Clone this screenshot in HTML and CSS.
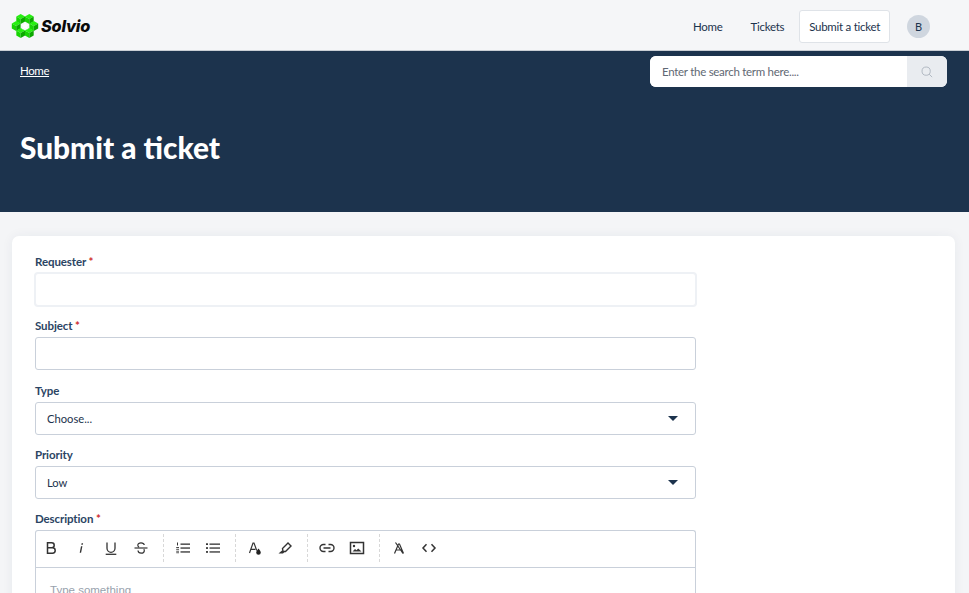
FILE: index.html
```html
<!DOCTYPE html>
<html lang="en">
<head>
<meta charset="utf-8">
<title>Submit a ticket</title>
<link rel="stylesheet" href="styles.css">
</head>
<body>
<header class="topbar">
  <a class="logo" href="#">
    <svg class="logo-mark" viewBox="0 0 28 24" width="28" height="24" aria-hidden="true">
      <defs>
        <g id="cube">
          <polygon points="0,-5 4.400,-2.500 0,0 -4.400,-2.500" fill="#26f010"/>
          <polygon points="-4.400,-2.500 0,0 0,5 -4.400,2.500" fill="#18d404"/>
          <polygon points="4.400,-2.500 0,0 0,5 4.400,2.500" fill="#0ca800"/>
        </g>
      </defs>
      <use href="#cube" x="9.700" y="5"/>
      <use href="#cube" x="18.300" y="5"/>
      <use href="#cube" x="5.200" y="12"/>
      <use href="#cube" x="22.800" y="12"/>
      <use href="#cube" x="9.700" y="19"/>
      <use href="#cube" x="18.300" y="19"/>
      <polygon points="14,8 15.200,10.400 18,10.600 15.900,12.500 16.600,15.400 14,13.900 11.400,15.400 12.100,12.500 10,10.600 12.800,10.400" fill="#fff"/>
    </svg>
    <span class="logo-text">Solvio</span>
  </a>
  <nav class="nav">
    <a class="nav-link" href="#">Home</a>
    <a class="nav-link" href="#">Tickets</a>
    <a class="nav-link nav-active" href="#">Submit a ticket</a>
    <span class="avatar">B</span>
  </nav>
</header>

<section class="hero">
  <div class="hero-top">
    <a class="crumb" href="#">Home</a>
    <div class="search">
      <input class="search-input" type="text" placeholder="Enter the search term here....">
      <span class="search-btn">
        <svg viewBox="0 0 14 14" width="12" height="12" fill="none" stroke="#a9b1bb" stroke-width="1" aria-hidden="true"><circle cx="6" cy="6" r="4.800"/><path d="M9.500 9.500L13 13"/></svg>
      </span>
    </div>
  </div>
  <h1 class="hero-title">Submit a ticket</h1>
</section>

<main class="card">
  <form class="form">
    <div class="field">
      <label class="label">Requester <span class="req">*</span></label>
      <input class="control control-focus" type="text">
    </div>
    <div class="field">
      <label class="label">Subject <span class="req">*</span></label>
      <input class="control" type="text">
    </div>
    <div class="field">
      <label class="label">Type</label>
      <div class="control select"><span>Choose...</span><i class="caret"></i></div>
    </div>
    <div class="field">
      <label class="label">Priority</label>
      <div class="control select"><span>Low</span><i class="caret"></i></div>
    </div>
    <div class="field">
      <label class="label">Description <span class="req">*</span></label>
      <div class="editor">
        <div class="toolbar">
          <div class="tool-group">
            <span class="tool"><svg viewBox="0 0 16 16" width="16" height="16" fill="none" stroke="#333" stroke-width="1.500"><path d="M4.500 2.800h4.200a2.500 2.500 0 0 1 0 5H4.500zM4.500 7.800h5a2.700 2.700 0 0 1 0 5.400h-5z"/></svg></span>
            <span class="tool"><svg viewBox="0 0 16 16" width="16" height="16" fill="#333"><path d="M8.600 3.200h1.500l-.3 1.500H8.300zM8 6.300h1.400l-1.300 6.500H6.700z"/></svg></span>
            <span class="tool"><svg viewBox="0 0 16 16" width="16" height="16" fill="none" stroke="#333" stroke-width="1.300"><path d="M4 2.500v5.800a4 4 0 0 0 8 0V2.500"/><path d="M2.700 14.300h10.600"/></svg></span>
            <span class="tool"><svg viewBox="0 0 16 16" width="16" height="16" fill="none" stroke="#333" stroke-width="1.200"><path d="M1.500 8h13"/><path d="M11.300 5c-.3-1.500-1.700-2.200-3.300-2.200-1.800 0-3.200 1-3.200 2.400 0 .9.500 1.500 1.200 2M5 10.500c.2 1.800 1.500 2.700 3.100 2.700 1.800 0 3.200-1 3.200-2.500 0-.6-.2-1.100-.5-1.500"/></svg></span>
          </div>
          <div class="tool-group">
            <span class="tool"><svg viewBox="0 0 16 16" width="16" height="16" fill="#333"><rect x="5.500" y="3.500" width="9.500" height="1.300"/><rect x="5.500" y="7.400" width="9.500" height="1.300"/><rect x="5.500" y="11.300" width="9.500" height="1.300"/><rect x="2" y="2.500" width="1" height="3"/><rect x="1.200" y="7" width="2.800" height=".9"/><rect x="1.200" y="8.800" width="2.800" height=".9"/><rect x="1.200" y="10.800" width="2.800" height=".8"/><rect x="1.200" y="12.400" width="2.800" height=".8"/></svg></span>
            <span class="tool"><svg viewBox="0 0 16 16" width="16" height="16" fill="#333"><rect x="4.500" y="3.500" width="10.500" height="1.300"/><rect x="4.500" y="7.400" width="10.500" height="1.300"/><rect x="4.500" y="11.300" width="10.500" height="1.300"/><rect x="1" y="3.300" width="2" height="1.700"/><rect x="1" y="7.200" width="2" height="1.700"/><rect x="1" y="11.100" width="2" height="1.700"/></svg></span>
          </div>
          <div class="tool-group">
            <span class="tool"><svg viewBox="0 0 16 16" width="16" height="16"><path d="M2.500 13L6 3h1l2.700 7.500M3.800 9.300h4.500" fill="none" stroke="#333" stroke-width="1.200"/><path d="M11.500 8.500c1.400 1.800 2.300 2.900 2.300 4a2.300 2.300 0 0 1-4.600 0c0-1.100.9-2.200 2.300-4z" fill="#222"/></svg></span>
            <span class="tool"><svg viewBox="0 0 16 16" width="16" height="16"><path d="M5.500 8.500l5.500-5.500 3 3-5.500 5.500H6z" fill="none" stroke="#333" stroke-width="1.400"/><path d="M5 10.500l-3.500 3h4.500l1.500-1.500z" fill="#333"/></svg></span>
          </div>
          <div class="tool-group">
            <span class="tool"><svg viewBox="0 0 16 16" width="16" height="16" fill="none" stroke="#333" stroke-width="1.400"><path d="M6.500 4.500H4.500a3.500 3.500 0 0 0 0 7h2M9.500 4.500h2a3.500 3.500 0 0 1 0 7h-2M4.500 8h7"/></svg></span>
            <span class="tool"><svg viewBox="0 0 16 16" width="16" height="16"><rect x="1.500" y="2.500" width="13" height="11" fill="none" stroke="#333" stroke-width="1.500"/><circle cx="5" cy="6" r="1.200" fill="#333"/><path d="M3.500 11.500l2.500-2.500 1.500 1.200 1.700-1.700 3.300 3z" fill="#333"/></svg></span>
          </div>
          <div class="tool-group">
            <span class="tool"><svg viewBox="0 0 16 16" width="16" height="16" fill="none" stroke="#333" stroke-width="1.200"><path d="M3.500 13.500L7.500 4h1l4 9.500M5 10h6M4.500 2.500l7.500 11"/></svg></span>
            <span class="tool"><svg viewBox="0 0 16 16" width="16" height="16" fill="none" stroke="#333" stroke-width="1.500"><path d="M5.500 4.300L2 8l3.500 3.700M10.500 4.300L14 8l-3.500 3.700"/></svg></span>
          </div>
        </div>
        <div class="editor-body">Type something</div>
      </div>
    </div>
  </form>
</main>
</body>
</html>
```
FILE: styles.css
```css
* { box-sizing: border-box; }
html, body { height: 100%; overflow: hidden; }
body {
  margin: 0;
  background: #f4f5f7;
  color: #1c334d;
  font-family: Lato, "Noto Sans", sans-serif;
  font-size: 12px;
}
a { color: inherit; text-decoration: none; }

.topbar {
  height: 51px;
  display: flex;
  align-items: center;
  justify-content: space-between;
  padding: 2px 39px 0 11px;
  background: #f5f6f8;
  border-bottom: 1px solid #c9ced4;
}
.logo { display: flex; align-items: center; gap: 2px; }
.logo-mark { display: block; }
.logo-text {
  font-family: Inter, sans-serif;
  font-weight: 800;
  font-style: italic;
  font-size: 16.300px;
  color: #0a0a0a;
  letter-spacing: -0.200px;
}
.nav { display: flex; align-items: center; }
.nav-link {
  padding: 0 14px;
  font-size: 11.500px;
  line-height: 31px;
  letter-spacing: -0.280px;
}
.nav-active {
  padding: 0 9px;
  background: #fff;
  border: 1px solid #dfe3e8;
  border-radius: 3px;
  margin-left: 1px;
}
.avatar {
  width: 23px;
  height: 23px;
  margin-left: 17px;
  border-radius: 50%;
  background: #cfd6df;
  display: flex;
  align-items: center;
  justify-content: center;
  font-size: 11px;
}

.hero {
  height: 161px;
  background: #1c334d;
  color: #fff;
  padding: 5px 22px 0 20px;
}
.hero-top { display: flex; justify-content: space-between; align-items: flex-start; }
.crumb {
  margin-top: 7px;
  font-size: 11.500px;
  line-height: 16px;
  letter-spacing: -0.400px;
  text-decoration: underline;
}
.search {
  width: 297px;
  height: 31px;
  display: flex;
  background: #fff;
  border-radius: 6px;
  overflow: hidden;
}
.search-input {
  flex: 1;
  min-width: 0;
  border: 0;
  outline: 0;
  padding: 0 12px;
  font: inherit;
  font-size: 11.500px;
  letter-spacing: -0.280px;
  color: #5f6873;
}
.search-input::placeholder { color: #5f6873; opacity: 1; }
.search-btn {
  width: 40px;
  background: #e9ecf0;
  display: flex;
  align-items: center;
  justify-content: center;
}
.hero-title {
  margin: 41px 0 0;
  font-size: 29.800px;
  line-height: 40px;
  font-weight: 900;
}

.card {
  margin: 24px 14px 0 12px;
  padding: 15px 23px 0;
  background: #fff;
  border-radius: 7px;
  box-shadow: 0 0 12px rgba(28, 51, 77, 0.06);
  min-height: 500px;
}
.form { width: 661px; display: flex; flex-direction: column; gap: 9.300px; }
.field { display: flex; flex-direction: column; }
.label {
  font-size: 11.500px;
  line-height: 22px;
  font-weight: 700;
  letter-spacing: -0.100px;
  color: #2b4463;
}
.req { color: #cf2e2e; }
.control {
  width: 100%;
  height: 33px;
  border: 1px solid #c9d0da;
  border-radius: 3px;
  background: #fff;
  outline: 0;
  font: inherit;
  font-size: 11.200px;
  padding: 0 11px;
}
.control-focus {
  border-color: #eef1f5;
  box-shadow: 0 0 0 1px #eef1f5;
}
.select {
  display: flex;
  align-items: center;
  justify-content: space-between;
  padding-right: 17px;
}
.caret {
  width: 0;
  height: 0;
  border-left: 5px solid transparent;
  border-right: 5px solid transparent;
  border-top: 5px solid #1c334d;
}
.editor {
  border: 1px solid #c9d0da;
  border-bottom: 0;
  border-radius: 3px 3px 0 0;
}
.toolbar {
  height: 37px;
  display: flex;
  align-items: center;
  padding-bottom: 2px;
  border-bottom: 1px solid #c9d0da;
}
.tool-group {
  display: flex;
  align-items: center;
  height: 28px;
  padding-right: 7px;
  margin-right: 4px;
  border-right: 1px dashed #d8d8d8;
}
.tool-group:last-child { border-right: 0; }
.tool {
  width: 30px;
  height: 28px;
  display: flex;
  align-items: center;
  justify-content: center;
}
.editor-body {
  height: 150px;
  padding: 15px 14px;
  font-family: "Liberation Sans", Arial, sans-serif;
  font-size: 11.500px;
  line-height: 14px;
  color: #98a2ad;
}
```
